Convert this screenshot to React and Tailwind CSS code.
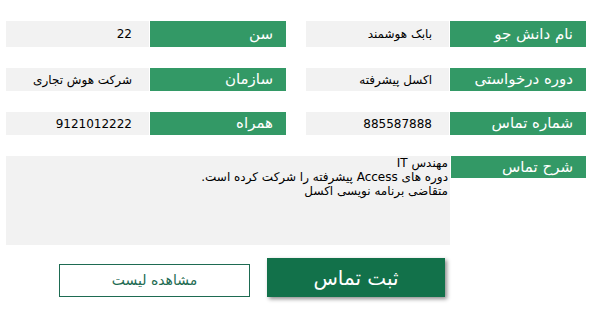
import React from "react";

const Field = ({ label, value, tall }) => (
  <div className={`flex gap-px ${tall ? "h-[26px]" : "h-[23px]"}`}>
    <div className="w-[136px] shrink-0 bg-[#339966] text-white text-[15px] pr-[13px] flex items-center">
      {label}
    </div>
    <div className="flex-1 bg-[#f2f2f2] text-black text-[12px] pr-[17px] flex items-center">
      {value}
    </div>
  </div>
);

const App = () => {
  const rows = [
    [
      { label: "نام دانش جو", value: "بابک هوشمند" },
      { label: "سن", value: "22" },
    ],
    [
      { label: "دوره درخواستی", value: "اکسل پیشرفته" },
      { label: "سازمان", value: "شرکت هوش تجاری" },
    ],
    [
      { label: "شماره تماس", value: "885587888" },
      { label: "همراه", value: "9121012222" },
    ],
  ];

  return (
    <div
      dir="rtl"
      className="w-[598px] h-[312px] bg-white pr-[12px] pl-[6px] pt-[21px] font-['DejaVu_Sans',sans-serif]"
    >
      {/* FIELDS */}
      <div className="flex flex-col gap-[21px]">
        {rows.map((row, i) => (
          <div key={i} className="grid grid-cols-2 gap-[20px]">
            {row.map((f) => (
              <Field key={f.label} label={f.label} value={f.value} tall={i === 0} />
            ))}
          </div>
        ))}

        {/* DESCRIPTION */}
        <div className="flex gap-px">
          <div className="w-[135px] shrink-0 self-start h-[22px] bg-[#339966] text-white text-[15px] pr-[13px] flex items-center">
            شرح تماس
          </div>
          <div className="flex-1 h-[89px] bg-[#f2f2f2] text-black text-[12px] leading-[14px] pr-[2px]">
            <div>مهندس IT</div>
            <div>دوره های Access پیشرفته را شرکت کرده است.</div>
            <div>متقاضی برنامه نویسی اکسل</div>
          </div>
        </div>
      </div>

      {/* BUTTONS */}
      <div className="flex items-end gap-[17px] mr-[141px] mt-[13px]">
        <button className="w-[178px] h-[39px] bg-[#12714a] text-white text-[20px] shadow-[2px_2px_4px_rgba(0,0,0,0.45)]">
          ثبت تماس
        </button>
        <button className="w-[191px] h-[33px] border border-[#1e6b52] bg-white text-[#1e6b52] text-[14px]">
          مشاهده لیست
        </button>
      </div>
    </div>
  );
};

export default App;
